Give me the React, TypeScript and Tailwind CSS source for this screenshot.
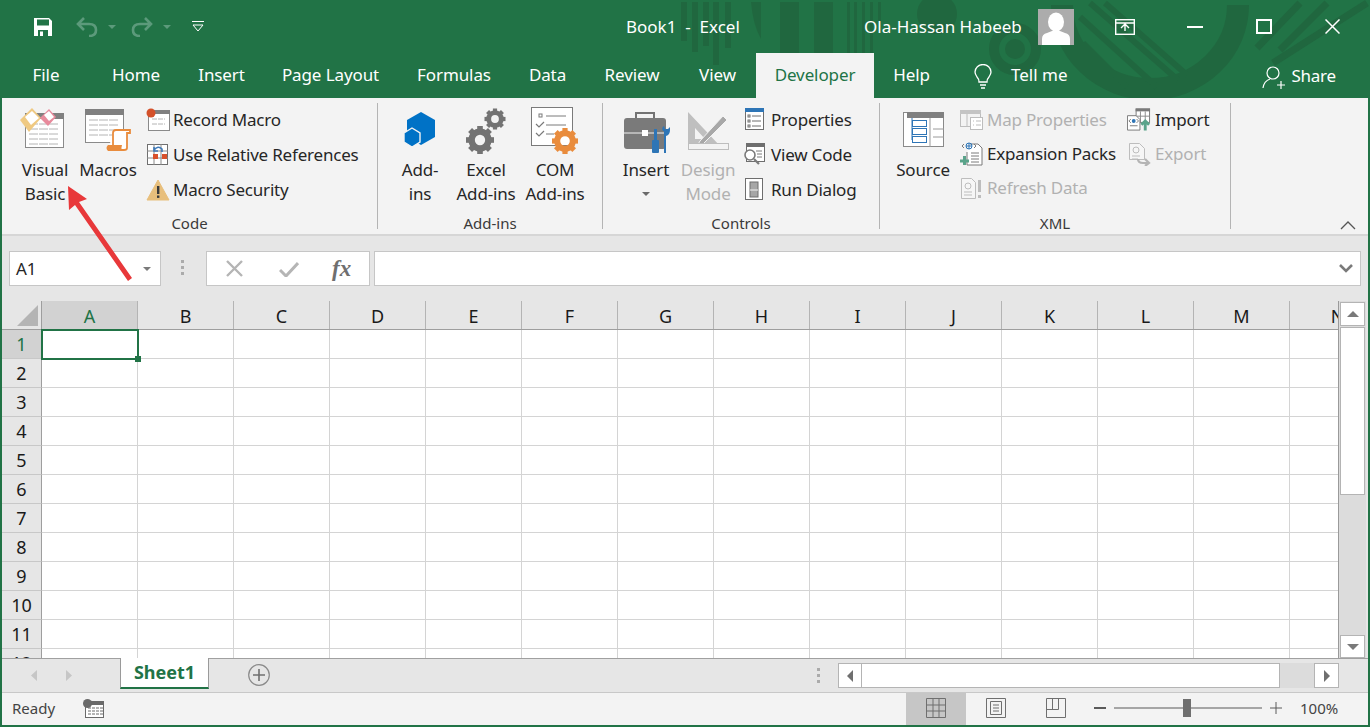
import React from 'react';

const font = { fontFamily: '"Noto Sans", "Open Sans", sans-serif' };
const COLS = ['A', 'B', 'C', 'D', 'E', 'F', 'G', 'H', 'I', 'J', 'K', 'L', 'M', 'N'];
const ROWS = [1, 2, 3, 4, 5, 6, 7, 8, 9, 10, 11, 12];
const TABS: [string, number][] = [
  ['File', 92],
  ['Home', 88],
  ['Insert', 83],
  ['Page Layout', 135],
  ['Formulas', 112],
  ['Data', 75],
  ['Review', 94],
  ['View', 77],
  ['Developer', 118],
  ['Help', 75],
];

function TitleArt() {
  const c = '#20673f';
  return (
    <svg className="absolute left-0 top-0" width="1370" height="98" viewBox="0 0 1370 98">
      <g fill={c}>
        <rect x="681" y="2" width="6" height="39" />
        <rect x="692" y="2" width="6" height="50" />
        <rect x="703" y="2" width="6" height="44" />
        <rect x="713" y="2" width="6" height="63" />
        <rect x="725" y="2" width="6" height="46" />
        <path d="M751 2h10v37q-8-14-10-37z" />
        <rect x="780" y="2" width="19" height="51" />
        <rect x="814" y="2" width="19" height="51" />
        <rect x="847" y="2" width="3" height="51" />
        <rect x="854" y="2" width="3" height="51" />
        <rect x="862" y="2" width="3" height="51" />
        <rect x="870" y="2" width="3" height="51" />
        <rect x="878" y="2" width="3" height="20" />
        <circle cx="937" cy="14" r="20" />
      </g>
      <g fill="none" stroke={c}>
        <circle cx="1015" cy="49" r="21" strokeWidth="10" />
        <path d="M1062 5a88 84 0 0 0 176 0" strokeWidth="22" />
        <path d="M1090 3l88 77M1105 3l82 72M1080 17l77 70M1083 43l44 44" strokeWidth="6" />
        <path d="M1257 48l43-45M1280 50l47-47M1273 63l94-60" strokeWidth="7" />
      </g>
      <circle cx="1015" cy="49" r="10" fill={c} />
    </svg>
  );
}

function Sheet({ x, y, w, h, bar = 6 }: { x: number; y: number; w: number; h: number; bar?: number }) {
  const lines = [];
  for (let ly = y + bar + 5; ly < y + h - 2; ly += 5) lines.push(ly);
  return (
    <g>
      <rect x={x + 0.5} y={y + 0.5} width={w} height={h} fill="#fff" stroke="#8a8a8a" />
      <rect x={x} y={y} width={w + 1} height={bar} fill="#808080" />
      {lines.map((ly) => (
        <path key={ly} d={`M${x + 4} ${ly}H${x + w - 4}`} stroke="#b4b4b4" strokeDasharray={w > 30 ? '9 1' : '5 1'} />
      ))}
    </g>
  );
}

function Gear({ cx, cy, r, color }: { cx: number; cy: number; r: number; color: string }) {
  const teeth = [0, 45, 90, 135, 180, 225, 270, 315];
  return (
    <g>
      <circle cx={cx} cy={cy} r={r * 0.6} fill="none" stroke={color} strokeWidth={r * 0.46} />
      {teeth.map((a) => (
        <rect
          key={a}
          x={cx - r * 0.2}
          y={cy - r}
          width={r * 0.4}
          height={r * 0.4}
          fill={color}
          transform={`rotate(${a} ${cx} ${cy})`}
        />
      ))}
    </g>
  );
}

function Ico({ w, h, children }: { w: number; h: number; children: React.ReactNode }) {
  return (
    <svg width={w} height={h} viewBox={`0 0 ${w} ${h}`}>
      {children}
    </svg>
  );
}

const VisualBasicIcon = () => (
  <Ico w={46} h={42}>
    <Sheet x={6} y={6} w={38} h={34} />
    <path d="M1 13L13 1 22 11 10 25z" fill="#efc982" />
    <path d="M6 10L13 4 20 11 12 18z" fill="#fff" />
    <path d="M21 11L30 2 37 10 29 19z" fill="#e88a9c" />
    <path d="M25 8L30 4 35 10 30 14z" fill="#fff" />
  </Ico>
);

const MacrosIcon = () => (
  <Ico w={47} h={43}>
    <Sheet x={0} y={0} w={38} h={33} />
    <path d="M28 24q0-3 3-3h14v3h-3v15q0 2-3 2H23" fill="#fff" stroke="#e98c3d" strokeWidth="1.800" />
    <path d="M28 24v12" stroke="#e98c3d" strokeWidth="1.800" />
    <path d="M23 36h14q-1 2 0 6H23q-3-3 0-6z" fill="#e98c3d" />
  </Ico>
);

const RecordIcon = () => (
  <Ico w={24} h={24}>
    <Sheet x={2} y={2} w={21} h={20} bar={4} />
    <circle cx="5" cy="5" r="4.500" fill="#d4512a" />
  </Ico>
);

const RelativeIcon = () => (
  <Ico w={22} h={22}>
    <rect x="0.500" y="0.500" width="20" height="20" fill="#fff" stroke="#6f6f6f" />
    <path d="M7 0v21M14 0v21M0 7h21M0 14h21" stroke="#8a8a8a" />
    <rect x="6" y="10" width="5" height="5" fill="#d9512c" />
    <rect x="15" y="10" width="5" height="5" fill="#d9512c" />
    <path d="M7 6q4-5 8-1v3M7 3v4h4" fill="none" stroke="#3f7ab8" strokeWidth="1.600" />
  </Ico>
);

const SecurityIcon = () => (
  <Ico w={24} h={22}>
    <path d="M12 1l11 20H1z" fill="#e8bf7c" stroke="#e8bf7c" strokeLinejoin="round" />
    <rect x="11" y="7" width="2.400" height="8" fill="#3a3a3a" />
    <rect x="11" y="16.500" width="2.400" height="2.400" fill="#3a3a3a" />
  </Ico>
);

const AddInsIcon = () => (
  <Ico w={32} h={36}>
    <path d="M17 0l14 8v17l-14 8-14-8V8z" fill="#0072c6" />
    <path d="M8 16l8 5v9l-8 5-8-5v-9z" fill="#0072c6" stroke="#f3f3f3" strokeWidth="1.400" />
  </Ico>
);

const ExcelAddInsIcon = () => (
  <Ico w={40} h={46}>
    <Gear cx={14} cy={32} r={14} color="#737373" />
    <Gear cx={29} cy={11} r={10.500} color="#737373" />
  </Ico>
);

const ComIcon = () => (
  <Ico w={48} h={48}>
    <rect x="0.500" y="0.500" width="41" height="38" fill="#fff" stroke="#7a7a7a" />
    <rect x="8" y="7" width="3" height="3" fill="none" stroke="#7a7a7a" />
    <path d="M15 9h20M15 18h20M15 27h8" stroke="#7a7a7a" />
    <path d="M5 17l3 3 5-5M5 26l3 3 5-5" fill="none" stroke="#7a7a7a" strokeWidth="1.200" />
    <Gear cx={34} cy={34} r={13} color="#e98c3d" />
  </Ico>
);

const InsertIcon = () => (
  <Ico w={46} h={44}>
    <path d="M12 8V3h18v5" fill="none" stroke="#737373" strokeWidth="2" />
    <rect x="0" y="8" width="42" height="31" rx="3" fill="#7a7a7a" />
    <path d="M0 23h42" stroke="#f3f3f3" />
    <rect x="18" y="20" width="6" height="6" fill="#fff" />
    <rect x="30" y="19" width="3" height="11" fill="#2e75b6" />
    <rect x="28" y="30" width="7" height="13" rx="1" fill="#2e75b6" />
    <path d="M40 21v22h2V26q4-1 4-6v-3l-2 2h-3l-1-3q-3 2-1 5z" fill="#2e75b6" />
  </Ico>
);

const DesignIcon = () => (
  <Ico w={46} h={42}>
    <path d="M3 2l32 34H3zM10 18v11h10z" fill="#bfbfbf" fillRule="evenodd" />
    <path d="M15 31l23-25 4 4-24 24-6 2z" fill="#a8a8a8" stroke="#f3f3f3" />
    <rect x="3.500" y="33.500" width="40" height="6" fill="#f3f3f3" stroke="#bdbdbd" />
  </Ico>
);

const PropertiesIcon = () => (
  <Ico w={20} h={23}>
    <rect x="0.500" y="0.500" width="18" height="21" fill="#fff" stroke="#6e6e6e" />
    <rect x="0" y="0" width="19" height="4" fill="#2e75b6" />
    <path d="M7 8h9M7 13h9M7 18h9" stroke="#6e6e6e" />
    <rect x="3" y="7" width="2" height="2" fill="none" stroke="#6e6e6e" />
    <rect x="3" y="12" width="2" height="2" fill="none" stroke="#6e6e6e" />
    <rect x="3" y="17" width="2" height="2" fill="none" stroke="#6e6e6e" />
  </Ico>
);

const ViewCodeIcon = () => (
  <Ico w={23} h={23}>
    <rect x="3.500" y="0.500" width="18" height="18" fill="#fff" stroke="#6e6e6e" />
    <rect x="3" y="0" width="19" height="4" fill="#6e6e6e" />
    <path d="M13 8h6M14 11h5M14 14h5" stroke="#7a7a7a" />
    <circle cx="7" cy="12" r="5" fill="#fff" stroke="#7a7a7a" strokeWidth="1.600" />
    <path d="M11 16l5 5" stroke="#7a7a7a" strokeWidth="2.200" />
  </Ico>
);

const RunDialogIcon = () => (
  <Ico w={19} h={23}>
    <rect x="0.500" y="0.500" width="17" height="21" fill="#fff" stroke="#6e6e6e" />
    <rect x="5" y="4" width="8" height="15" fill="#a6a6a6" stroke="#6e6e6e" />
    <path d="M5 12h8" stroke="#f3f3f3" />
  </Ico>
);

const SourceIcon = () => (
  <Ico w={41} h={36}>
    <rect x="0.500" y="0.500" width="40" height="34" fill="#fff" stroke="#8a8a8a" />
    <rect x="4" y="0" width="37" height="6" fill="#808080" />
    <path d="M27 6v29M30 17h11M30 25h11" stroke="#9a9a9a" />
    <path d="M9 6v22M9 12h4M9 20h4M9 28h4" fill="none" stroke="#2e75b6" />
    <rect x="9.500" y="8.500" width="14" height="6" fill="#fff" stroke="#2e75b6" />
    <rect x="9.500" y="16.500" width="14" height="6" fill="#fff" stroke="#2e75b6" />
    <rect x="9.500" y="24.500" width="14" height="6" fill="#fff" stroke="#2e75b6" />
  </Ico>
);

const MapIcon = () => (
  <Ico w={23} h={22}>
    <rect x="0.500" y="1.500" width="20" height="16" fill="#f3f3f3" stroke="#bdbdbd" />
    <rect x="0" y="1" width="21" height="4" fill="#c4c4c4" />
    <path d="M7 5v13" stroke="#bdbdbd" />
    <rect x="10.500" y="8.500" width="12" height="12" fill="#fff" stroke="#bdbdbd" />
    <path d="M13 12h1M13 16h1M16 12h5M16 16h5" stroke="#bdbdbd" />
  </Ico>
);

const Xml = ({ color, dot }: { color: string; dot: string }) => (
  <g>
    <circle cx="8" cy="4" r="3" fill="none" stroke={dot} />
    <path d="M5 4h6M8 1v6" stroke={dot} />
    <path d="M3 2l-2 2 2 2M13 2l2 2-2 2" fill="none" stroke={color} />
  </g>
);

const ExpansionIcon = () => (
  <Ico w={23} h={24}>
    <path d="M10 2h8l4 4v17H7V10" fill="#fff" stroke="#7a7a7a" />
    <path d="M11 11h8M11 14h8M11 17h8M11 20h8" stroke="#7a7a7a" />
    <g transform="translate(1 0)">
      <Xml color="#7a7a7a" dot="#2e75b6" />
    </g>
    <path d="M0 19h9M4.500 14v9" stroke="#5aa38a" strokeWidth="3" />
  </Ico>
);

const RefreshIcon = () => (
  <Ico w={23} h={23}>
    <path d="M1.500 1.500h10l4 4v16h-14z" fill="#f6f6f6" stroke="#bdbdbd" />
    <circle cx="8" cy="9" r="3" fill="none" stroke="#bdbdbd" />
    <path d="M4 15h8M4 18h8" stroke="#bdbdbd" />
    <rect x="18" y="3" width="3" height="12" fill="#bdbdbd" />
    <rect x="18" y="18" width="3" height="3" fill="#bdbdbd" />
  </Ico>
);

const ImportIcon = () => (
  <Ico w={25} h={24}>
    <rect x="9.500" y="0.500" width="14" height="14" fill="#fff" stroke="#7a7a7a" />
    <rect x="9" y="0" width="15" height="3" fill="#7a7a7a" />
    <path d="M14 3v12M19 3v12M10 8h14" stroke="#8a8a8a" />
    <path d="M0.500 7.500h9l4 4v11h-13z" fill="#fff" stroke="#7a7a7a" />
    <circle cx="7" cy="13" r="2" fill="#2e75b6" />
    <path d="M4 11l-2 2 2 2M10 11l2 2-2 2M3 18h8" fill="none" stroke="#7a7a7a" />
    <path d="M19 23V14M15 17l4-4 4 4" fill="none" stroke="#5aa38a" strokeWidth="3" />
  </Ico>
);

const ExportIcon = () => (
  <Ico w={23} h={23}>
    <path d="M1.500 0.500h10l5 5v11h-15z" fill="#f6f6f6" stroke="#bdbdbd" />
    <circle cx="8" cy="7" r="3" fill="none" stroke="#bdbdbd" />
    <path d="M4 13h8M4 16h6" stroke="#bdbdbd" />
    <path d="M10 16q0 4 5 4h5M17 16l4 4-4 3" fill="none" stroke="#b4b4b4" strokeWidth="2.200" />
  </Ico>
);

function BigButton({ icon, lines, w, iconTop, disabled }: { icon: React.ReactNode; lines: React.ReactNode[]; w: number; iconTop: number; disabled?: boolean }) {
  return (
    <div className="flex flex-col items-center" style={{ width: w }}>
      <div className="h-[55px] flex justify-center w-full" style={{ paddingTop: iconTop }}>
        {icon}
      </div>
      {lines.map((l, i) => (
        <div key={i} className={`h-6 leading-6 whitespace-nowrap text-[17px] tracking-[-0.15px] ${disabled ? 'text-[#b1b1b1]' : 'text-[#262626]'}`}>
          {l}
        </div>
      ))}
    </div>
  );
}

function SmallRow({ icon, label, disabled, h = 35, iconW, gap = 0 }: { icon: React.ReactNode; label: string; disabled?: boolean; h?: number; iconW: number; gap?: number }) {
  return (
    <div className="flex items-center" style={{ height: h }}>
      <div className="flex justify-center shrink-0" style={{ width: iconW, marginRight: gap }}>
        {icon}
      </div>
      <span className={`whitespace-nowrap text-[17px] tracking-[-0.2px] ${disabled ? 'text-[#b1b1b1]' : 'text-[#262626]'}`}>{label}</span>
    </div>
  );
}

function Group({ w, label, children }: { w: number; label: string; children: React.ReactNode }) {
  return (
    <div className="flex flex-col h-[126px] border-r border-[#b4b4b4] shrink-0" style={{ width: w }}>
      <div className="h-[110px] shrink-0 flex">{children}</div>
      <div className="h-[16px] shrink-0 text-center text-[15px] leading-[20px] text-[#3a3a3a]">{label}</div>
    </div>
  );
}

function Ribbon() {
  return (
    <div className="h-[138px] bg-[#f3f3f3] border-b-2 border-[#d6d6d6] pt-[5px] flex relative">
      <Group w={376} label="Code">
        <div className="w-[13px]" />
        <BigButton w={60} iconTop={4} icon={<div className="-ml-[6px]"><VisualBasicIcon /></div>} lines={['Visual', 'Basic']} />
        <BigButton w={66} iconTop={6} icon={<MacrosIcon />} lines={['Macros']} />
        <div className="w-[5px]" />
        <div className="flex flex-col -mt-[1px]">
          <SmallRow iconW={24} gap={3} icon={<RecordIcon />} label="Record Macro" />
          <SmallRow iconW={24} gap={3} icon={<RelativeIcon />} label="Use Relative References" />
          <SmallRow iconW={24} gap={3} icon={<SecurityIcon />} label="Macro Security" />
        </div>
      </Group>
      <Group w={225} label="Add-ins">
        <div className="w-[12px]" />
        <BigButton w={60} iconTop={9} icon={<AddInsIcon />} lines={['Add-', 'ins']} />
        <div className="w-[2px]" />
        <BigButton w={68} iconTop={5} icon={<ExcelAddInsIcon />} lines={['Excel', 'Add-ins']} />
        <BigButton w={70} iconTop={4} icon={<ComIcon />} lines={['COM', 'Add-ins']} />
      </Group>
      <Group w={277} label="Controls">
        <div className="w-[12px]" />
        <BigButton
          w={62}
          iconTop={7}
          icon={<div className="ml-[2px]"><InsertIcon /></div>}
          lines={[
            'Insert',
            <svg key="c" width="8" height="24" viewBox="0 0 8 24">
              <path d="M0 10h8l-4 4z" fill="#6a6a6a" />
            </svg>,
          ]}
        />
        <BigButton w={62} iconTop={7} disabled icon={<DesignIcon />} lines={['Design', 'Mode']} />
        <div className="flex flex-col -ml-[1px] -mt-[1px]">
          <SmallRow iconW={33} icon={<PropertiesIcon />} label="Properties" />
          <SmallRow iconW={33} icon={<ViewCodeIcon />} label="View Code" />
          <SmallRow iconW={33} icon={<RunDialogIcon />} label="Run Dialog" />
        </div>
      </Group>
      <Group w={351} label="XML">
        <div className="w-[13px]" />
        <BigButton w={60} iconTop={9} icon={<SourceIcon />} lines={['Source']} />
        <div className="w-[6px]" />
        <div className="flex flex-col w-[168px]">
          <SmallRow h={34} iconW={24} gap={4} disabled icon={<MapIcon />} label="Map Properties" />
          <SmallRow h={34} iconW={24} gap={4} icon={<ExpansionIcon />} label="Expansion Packs" />
          <SmallRow h={34} iconW={24} gap={4} disabled icon={<RefreshIcon />} label="Refresh Data" />
        </div>
        <div className="flex flex-col">
          <SmallRow h={34} iconW={24} gap={4} icon={<ImportIcon />} label="Import" />
          <SmallRow h={34} iconW={24} gap={4} disabled icon={<ExportIcon />} label="Export" />
        </div>
      </Group>
      <svg className="absolute left-[1338px] top-[122px]" width="16" height="10" viewBox="0 0 16 10">
        <path d="M1 9l7-7 7 7" fill="none" stroke="#555" strokeWidth="1.300" />
      </svg>
    </div>
  );
}

function TitleBar() {
  return (
    <div className="relative h-[53px] flex items-center text-white">
      <svg className="ml-[33px]" width="20" height="20" viewBox="0 0 20 20">
        <path d="M1 1h15l3 3v15H1z" fill="#fff" />
        <rect x="4" y="2.500" width="12" height="6" fill="#217346" />
        <rect x="5" y="13" width="10" height="6" fill="#217346" />
        <rect x="7" y="14.500" width="3" height="4.500" fill="#fff" />
      </svg>
      <svg className="ml-[23px]" width="22" height="20" viewBox="0 0 22 20">
        <path d="M8 1L2 7l6 6M2 7h11q7 0 7 6t-7 6" fill="none" stroke="#5c9a7b" strokeWidth="2.600" />
      </svg>
      <svg className="ml-[10px]" width="8" height="4" viewBox="0 0 8 4">
        <path d="M0 0h8L4 4z" fill="#5c9a7b" />
      </svg>
      <svg className="ml-[15px]" width="22" height="20" viewBox="0 0 22 20">
        <path d="M14 1l6 6-6 6M20 7H9q-7 0-7 6t7 6" fill="none" stroke="#5c9a7b" strokeWidth="2.600" />
      </svg>
      <svg className="ml-[10px]" width="8" height="4" viewBox="0 0 8 4">
        <path d="M0 0h8L4 4z" fill="#5c9a7b" />
      </svg>
      <svg className="ml-[21px]" width="12" height="11" viewBox="0 0 12 11">
        <path d="M0 .5h12M1 4h10L6 10z" fill="none" stroke="#fff" strokeWidth="1" />
      </svg>
      <div className="ml-[422px] w-[238px] text-[17px] whitespace-pre">Book1  -  Excel</div>
      <div className="w-[158px] text-[17px] whitespace-nowrap">Ola-Hassan Habeeb</div>
      <div className="ml-[16px] w-[36px] h-[36px] bg-[#acacac] overflow-hidden">
        <svg width="36" height="36" viewBox="0 0 36 36">
          <ellipse cx="18" cy="13" rx="8" ry="9.500" fill="#fff" />
          <path d="M4 36v-6q0-5 5-6l5-2h8l5 2q5 1 5 6v6z" fill="#fff" />
        </svg>
      </div>
      <svg className="ml-[41px]" width="20" height="16" viewBox="0 0 20 16">
        <rect x="0.700" y="0.700" width="18.600" height="14.600" fill="none" stroke="#fff" strokeWidth="1.400" />
        <path d="M0 4h20M6 9l4-4 4 4M10 5v7" fill="none" stroke="#fff" strokeWidth="1.400" />
      </svg>
      <div className="ml-[52px] w-[16px] h-[2px] bg-white" />
      <div className="ml-[53px] w-[16px] h-[15px] border-2 border-white" />
      <svg className="ml-[53px]" width="15" height="15" viewBox="0 0 15 15">
        <path d="M0.500 0.500l14 14M14.500 0.500l-14 14" stroke="#fff" strokeWidth="1.500" />
      </svg>
    </div>
  );
}

function TabRow() {
  return (
    <div className="relative h-[45px] flex items-stretch">
      {TABS.map(([t, w]) => (
        <div
          key={t}
          className={`flex items-center justify-center text-[17px] pb-[1px] tracking-[-0.1px] ${t === 'Developer' ? 'bg-[#f3f3f3] text-[#217346]' : 'text-white'}`}
          style={{ width: w }}
        >
          {t}
        </div>
      ))}
      <svg className="ml-[25px] mt-[11px]" width="18" height="26" viewBox="0 0 18 26">
        <path d="M5 18q0-3-2-5-2-3-2-5a8 7.500 0 0 1 16 0q0 2-2 5-2 2-2 5z" fill="none" stroke="#fff" strokeWidth="1.300" />
        <path d="M6 21h6M7 24h4" stroke="#fff" strokeWidth="1.500" />
      </svg>
      <div className="ml-[19px] flex items-center text-[17px] text-white pb-[1px]">Tell me</div>
      <svg className="ml-[194px] mt-[13px]" width="23" height="23" viewBox="0 0 23 23">
        <circle cx="11" cy="7" r="6" fill="none" stroke="#fff" strokeWidth="1.200" />
        <path d="M1 22q1-7 7-9M15 19h8M19 15v8" fill="none" stroke="#fff" strokeWidth="1.200" />
      </svg>
      <div className="ml-[7px] flex items-center text-[17px] tracking-[-0.3px] text-white">Share</div>
    </div>
  );
}

function FormulaBar() {
  return (
    <div className="h-[65px] bg-[#e6e6e6] flex items-start pt-[15px]">
      <div className="ml-[7px] w-[152px] h-[35px] bg-white border border-[#c6c6c6] flex items-center justify-between pl-[6px] pr-[9px] text-[17px] text-[#262626]">
        A1
        <svg width="8" height="4" viewBox="0 0 8 4">
          <path d="M0 0h8L4 4z" fill="#7a7a7a" />
        </svg>
      </div>
      <div className="ml-[20px] mt-[9px] flex flex-col gap-[3px]">
        <div className="w-[3px] h-[3px] bg-[#ababab]" />
        <div className="w-[3px] h-[3px] bg-[#ababab]" />
        <div className="w-[3px] h-[3px] bg-[#ababab]" />
      </div>
      <div className="ml-[22px] w-[164px] h-[35px] bg-white border border-[#c6c6c6] flex items-center">
        <svg className="ml-[19px]" width="17" height="17" viewBox="0 0 17 17">
          <path d="M1 1l15 15M16 1L1 16" stroke="#b5b5b5" strokeWidth="2.400" />
        </svg>
        <svg className="ml-[36px]" width="20" height="16" viewBox="0 0 20 16">
          <path d="M1 9l6 6L19 2" fill="none" stroke="#b5b5b5" strokeWidth="3" />
        </svg>
        <span className="ml-[33px] text-[23px] leading-none italic font-bold text-[#6f6f6f]" style={{ fontFamily: '"Liberation Serif", serif' }}>
          fx
        </span>
      </div>
      <div className="ml-[4px] w-[987px] h-[35px] bg-white border border-[#c6c6c6] flex items-center justify-end pr-[7px]">
        <svg width="14" height="9" viewBox="0 0 14 9">
          <path d="M1 1l6 6 6-6" fill="none" stroke="#7a7a7a" strokeWidth="2.600" />
        </svg>
      </div>
    </div>
  );
}

function Grid() {
  return (
    <div className="w-[1337px] h-[357px] overflow-hidden border-r border-[#9a9a9a] shrink-0">
      <div className="flex h-[29px] bg-[#e6e6e6] border-b border-[#9e9e9e] box-border">
        <div className="w-[40px] shrink-0 border-r border-[#9e9e9e] flex items-end justify-end pr-[3px] pb-[3px]">
          <svg width="21" height="21" viewBox="0 0 21 21">
            <path d="M0 21L21 0v21z" fill="#b4b4b4" />
          </svg>
        </div>
        {COLS.map((c, i) => (
          <div
            key={c}
            className={`w-[96px] shrink-0 flex items-center justify-center text-[18px] pt-[3px] border-r border-[#b4b4b4] ${i === 0 ? 'bg-[#d2d2d2] text-[#217346]' : 'text-[#1a1a1a]'}`}
          >
            {c}
          </div>
        ))}
      </div>
      {ROWS.map((r) => (
        <div key={r} className="flex h-[29px]">
          <div
            className={`w-[40px] shrink-0 border-r border-b border-r-[#9e9e9e] border-b-[#c8c8c8] flex items-center justify-center text-[18px] ${r === 1 ? 'bg-[#d2d2d2] text-[#217346]' : 'bg-[#e6e6e6] text-[#1a1a1a]'}`}
          >
            {r}
          </div>
          {COLS.map((c) => (
            <div key={c} className="relative w-[96px] shrink-0 bg-white border-r border-b border-[#d4d4d4]">
              {r === 1 && c === 'A' && (
                <div className="absolute z-10 -left-[1px] -top-[1px] w-[98px] h-[31px] border-2 border-[#217346]">
                  <div className="absolute -right-[4px] -bottom-[4px] w-[6px] h-[6px] bg-[#217346]" />
                </div>
              )}
            </div>
          ))}
        </div>
      ))}
    </div>
  );
}

function ScrollBar() {
  return (
    <div className="w-[27px] h-[357px] bg-[#dcdcdc] flex flex-col items-center pt-[1px]">
      <div className="w-[25px] h-[24px] bg-white border border-[#b4b4b4] flex items-center justify-center">
        <svg width="12" height="6" viewBox="0 0 12 6">
          <path d="M6 0l6 6H0z" fill="#7a7a7a" />
        </svg>
      </div>
      <div className="mt-[1px] w-[25px] h-[168px] bg-white border border-[#b4b4b4]" />
      <div className="flex-1" />
      <div className="w-[25px] h-[23px] bg-white border border-[#b4b4b4] flex items-center justify-center">
        <svg width="12" height="6" viewBox="0 0 12 6">
          <path d="M6 6L12 0H0z" fill="#7a7a7a" />
        </svg>
      </div>
    </div>
  );
}

function SheetBar() {
  return (
    <div className="h-[35px] bg-[#e6e6e6] border-t border-b border-t-[#a0a0a0] border-b-[#c8c8c8] flex items-start">
      <svg className="ml-[29px] mt-[11px]" width="41" height="11" viewBox="0 0 41 11">
        <path d="M6 0v11L0 5.500zM35 0v11l6-5.500z" fill="#c6c6c6" />
      </svg>
      <div className="ml-[48px] -mt-[1px] w-[89px] h-[31px] bg-white border-l border-r border-b-2 border-l-[#9a9a9a] border-r-[#9a9a9a] border-b-[#217346] flex items-center justify-center text-[18px] font-bold text-[#217346]">
        Sheet1
      </div>
      <svg className="ml-[39px] mt-[5px]" width="22" height="22" viewBox="0 0 22 22">
        <circle cx="11" cy="11" r="10.300" fill="none" stroke="#8a8a8a" strokeWidth="1.200" />
        <path d="M11 5v12M5 11h12" stroke="#707070" strokeWidth="1.600" />
      </svg>
      <div className="ml-[547px] mt-[9px] flex flex-col gap-[3px]">
        <div className="w-[3px] h-[3px] bg-[#ababab]" />
        <div className="w-[3px] h-[3px] bg-[#ababab]" />
        <div className="w-[3px] h-[3px] bg-[#ababab]" />
      </div>
      <div className="ml-[18px] mt-[4px] w-[501px] h-[25px] flex bg-[#dcdcdc]">
        <div className="w-[24px] bg-white border border-[#b4b4b4] flex items-center justify-center">
          <svg width="6" height="12" viewBox="0 0 6 12">
            <path d="M0 6l6-6v12z" fill="#6f6f6f" />
          </svg>
        </div>
        <div className="w-[418px] bg-white border border-l-0 border-[#b4b4b4]" />
        <div className="flex-1" />
        <div className="w-[25px] bg-white border border-[#b4b4b4] flex items-center justify-center">
          <svg width="6" height="12" viewBox="0 0 6 12">
            <path d="M6 6L0 0v12z" fill="#6f6f6f" />
          </svg>
        </div>
      </div>
    </div>
  );
}

function StatusBar() {
  return (
    <div className="h-[32px] bg-[#f3f3f3] flex items-center text-[#444] pb-[2px]">
      <div className="ml-[10px] w-[71px] text-[15px]">Ready</div>
      <svg width="21" height="19" viewBox="0 0 21 19">
        <rect x="2.500" y="2.500" width="18" height="16" fill="#fff" stroke="#6a6a6a" />
        <rect x="2" y="2" width="19" height="4" fill="#6a6a6a" />
        <path d="M5 9h15M5 12h15M5 15h15" stroke="#6a6a6a" strokeDasharray="3 1" />
        <circle cx="4.500" cy="4.500" r="4.500" fill="#6a6a6a" />
      </svg>
      <div className="ml-[802px] mt-[2px] w-[60px] h-[32px] bg-[#c6c6c6] flex items-center justify-center pb-[2px]">
        <svg width="20" height="20" viewBox="0 0 20 20">
          <path d="M.5.500h19v19H.5zM7 .500v19M13 .500v19M.5 7h19M.5 13h19" fill="none" stroke="#6f6f6f" />
        </svg>
      </div>
      <div className="w-[60px] flex justify-center">
        <svg width="20" height="20" viewBox="0 0 20 20">
          <path d="M.5.500h19v19H.5z" fill="none" stroke="#6f6f6f" />
          <path d="M4.500 3.500h11v13h-11zM7 7h6M7 10h6M7 13h6" fill="none" stroke="#6f6f6f" />
        </svg>
      </div>
      <div className="w-[60px] flex justify-center">
        <svg width="20" height="20" viewBox="0 0 20 20">
          <path d="M.5.500h19v19H.5zM.5 11.500h12M6.500.500v11M12.500.500v11" fill="none" stroke="#6f6f6f" />
        </svg>
      </div>
      <div className="ml-[8px] w-[12px] h-[2px] bg-[#5a5a5a]" />
      <div className="ml-[8px] w-[148px] h-[2px] bg-[#a6a6a6] relative">
        <div className="absolute left-[69px] -top-[8px] w-[8px] h-[18px] bg-[#6f6f6f]" />
      </div>
      <svg className="ml-[8px]" width="12" height="12" viewBox="0 0 12 12">
        <path d="M0 6h12M6 0v12" stroke="#5a5a5a" />
      </svg>
      <div className="ml-[18px] text-[15px]">100%</div>
    </div>
  );
}

export default function App() {
  return (
    <div className="relative w-[1370px] h-[727px] overflow-hidden bg-[#217346] px-[2px] pb-[2px]" style={font}>
      <div className="-mx-[2px] relative">
        <TitleArt />
        <TitleBar />
        <TabRow />
      </div>
      <Ribbon />
      <FormulaBar />
      <div className="flex bg-[#e6e6e6]">
        <Grid />
        <ScrollBar />
        <div className="flex-1" />
      </div>
      <SheetBar />
      <StatusBar />
      <svg className="absolute left-[60px] top-[180px]" width="80" height="105" viewBox="0 0 80 105">
        <path d="M8 6l19 13-8 3 53 76-4 3-53-76-6 5z" fill="#e8383a" />
      </svg>
    </div>
  );
}
